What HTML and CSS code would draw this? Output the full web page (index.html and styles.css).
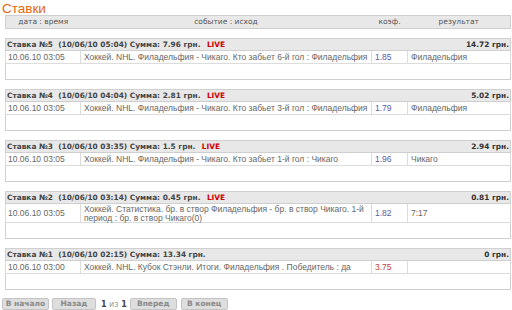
FILE: index.html
```html
<!DOCTYPE html>
<html>
<head>
<meta charset="utf-8">
<link rel="stylesheet" href="styles.css">
</head>
<body>
<div class="page">
  <div class="title">Ставки</div>
  <table class="head">
    <colgroup><col class="k-date"><col><col class="k-coef"><col class="k-res"></colgroup>
    <tr>
      <td>дата : время</td>
      <td>событие : исход</td>
      <td>коэф.</td>
      <td>результат</td>
    </tr>
  </table>

  <table class="bet">
    <colgroup><col class="k-date"><col><col class="k-coef"><col class="k-res"></colgroup>
    <tr class="bet-head"><td colspan="3"><span class="b">Ставка №5&nbsp; (10/06/10 05:04) Сумма: 7.96 грн.</span> <span class="live">LIVE</span></td><td class="sum win">14.72 грн.</td></tr>
    <tr class="row"><td>10.06.10 03:05</td><td>Хоккей. NHL. Филадельфия - Чикаго. Кто забьет 6-й гол : Филадельфия</td><td class="coef">1.85</td><td>Филадельфия</td></tr>
    <tr class="empty"><td colspan="4"></td></tr>
  </table>

  <table class="bet">
    <colgroup><col class="k-date"><col><col class="k-coef"><col class="k-res"></colgroup>
    <tr class="bet-head"><td colspan="3"><span class="b">Ставка №4&nbsp; (10/06/10 04:04) Сумма: 2.81 грн.</span> <span class="live">LIVE</span></td><td class="sum win">5.02 грн.</td></tr>
    <tr class="row"><td>10.06.10 03:05</td><td>Хоккей. NHL. Филадельфия - Чикаго. Кто забьет 3-й гол : Филадельфия</td><td class="coef">1.79</td><td>Филадельфия</td></tr>
    <tr class="empty"><td colspan="4"></td></tr>
  </table>

  <table class="bet">
    <colgroup><col class="k-date"><col><col class="k-coef"><col class="k-res"></colgroup>
    <tr class="bet-head"><td colspan="3"><span class="b">Ставка №3&nbsp; (10/06/10 03:35) Сумма: 1.5 грн.</span> <span class="live">LIVE</span></td><td class="sum win">2.94 грн.</td></tr>
    <tr class="row"><td>10.06.10 03:05</td><td>Хоккей. NHL. Филадельфия - Чикаго. Кто забьет 1-й гол : Чикаго</td><td class="coef">1.96</td><td>Чикаго</td></tr>
    <tr class="empty"><td colspan="4"></td></tr>
  </table>

  <table class="bet">
    <colgroup><col class="k-date"><col><col class="k-coef"><col class="k-res"></colgroup>
    <tr class="bet-head"><td colspan="3"><span class="b">Ставка №2&nbsp; (10/06/10 03:14) Сумма: 0.45 грн.</span> <span class="live">LIVE</span></td><td class="sum win">0.81 грн.</td></tr>
    <tr class="row"><td>10.06.10 03:05</td><td>Хоккей. Статистика. бр. в створ Филадельфия - бр. в створ Чикаго. 1-й период : бр. в створ Чикаго(0)</td><td class="coef">1.82</td><td>7:17</td></tr>
    <tr class="empty"><td colspan="4"></td></tr>
  </table>

  <table class="bet">
    <colgroup><col class="k-date"><col><col class="k-coef"><col class="k-res"></colgroup>
    <tr class="bet-head"><td colspan="3"><span class="b">Ставка №1&nbsp; (10/06/10 02:15) Сумма: 13.34 грн.</span></td><td class="sum lose">0 грн.</td></tr>
    <tr class="row"><td>10.06.10 03:00</td><td>Хоккей. NHL. Кубок Стэнли. Итоги. Филадельфия . Победитель : да</td><td class="coef red">3.75</td><td></td></tr>
    <tr class="empty"><td colspan="4"></td></tr>
  </table>

  <div class="pager">
    <button class="btn">В начало</button>
    <button class="btn w">Назад</button>
    <span class="pg"><b>1</b> из <b>1</b></span>
    <button class="btn">Вперед</button>
    <button class="btn last">В конец</button>
  </div>
</div>
</body>
</html>
```
FILE: styles.css
```css
html, body { margin: 0; padding: 0; background: #fff; }
body { font-family: "Liberation Sans", Arial, sans-serif; font-size: 8.5px; color: #555; }
.page { padding: 3px 1px 0 5px; width: 506px; }
.title { color: #e4670e; font-size: 13.5px; line-height: 12px; margin-left: -3px; height: 12px; }
table { border-collapse: collapse; width: 506px; table-layout: fixed; }
td { padding: 0; }
.k-date { width: 75px; }
.k-coef { width: 36px; }
.k-res { width: 103px; }
.head { background: #e8e8e8; border: 1px solid #cfcfcf; }
.head td { text-align: center; font-family: "DejaVu Sans", Verdana, sans-serif; font-size: 7.5px; color: #555; height: 12px; line-height: 12px; }
.bet { margin-top: 9px; border: 1px solid #cfcfcf; }
.bet-head td { background: #e8e8e8; height: 11px; line-height: 11px; padding: 0 1px; color: #333; border-bottom: 1px solid #cfcfcf; font-family: "DejaVu Sans", Verdana, sans-serif; font-size: 7.4px; }
.b { font-weight: bold; color: #444; }
.live { font-weight: bold; color: #d00000; margin-left: 4px; }
.sum { text-align: right; font-weight: bold; }
.win { color: #27287a; }
.lose { color: #7a0000; }
.row td { border: 1px solid #dcdcdc; border-top: 0; padding: 1px 2px 0 3px; line-height: 8.5px; height: 11px; color: #666; vertical-align: middle; }
.row td:first-child { padding-left: 2px; }
.row .coef { color: #5a5aa0; }
.row .coef.red { color: #c04040; }
.empty td { height: 15px; }
.pager { margin-top: 8px; display: flex; align-items: center; margin-left: -3px; gap: 3px; }
.btn { font-family: "DejaVu Sans", Verdana, sans-serif; font-size: 7.5px; font-weight: bold; color: #888; background: #dedede; border: 1px solid #c4c4c4; border-radius: 2px; height: 12px; padding: 0; line-height: 10px; width: 47px; }
.btn.w { width: 44px; }
.btn.last { margin-left: 1px; }
.pg { color: #999; margin: 0 0 0 2px; font-family: "DejaVu Sans", Verdana, sans-serif; font-size: 8px; }
.pg b { color: #444; }
```
